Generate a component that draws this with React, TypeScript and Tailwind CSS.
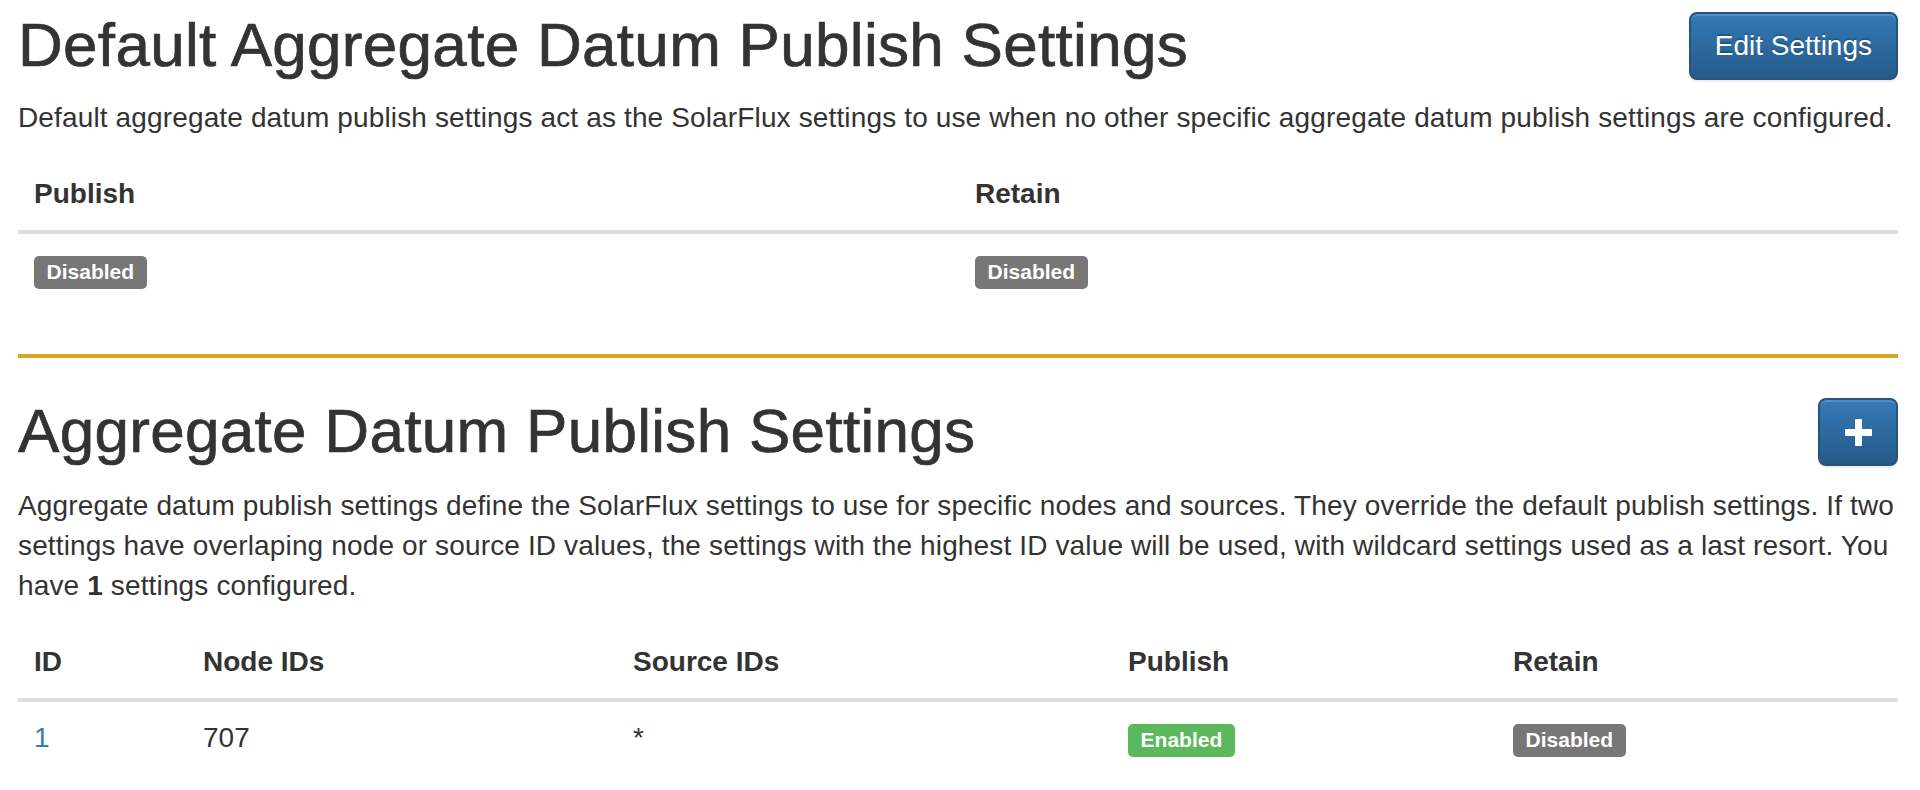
import React from "react";

type Tone = "default" | "success";

const Badge: React.FC<{ tone?: Tone; children: React.ReactNode }> = ({ tone = "default", children }) => (
  <span
    className={
      tone === "success"
        ? "inline-block rounded-[5px] bg-[#5cb85c] px-[12.6px] pt-[4.2px] pb-[6.3px] align-baseline text-[21px] font-bold leading-[23px] text-white"
        : "inline-block rounded-[5px] bg-[#777777] px-[12.6px] pt-[4.2px] pb-[6.3px] align-baseline text-[21px] font-bold leading-[23px] text-white"
    }
  >
    {children}
  </span>
);

const PlusIcon = () => (
  <svg width="27" height="27" viewBox="0 0 27 27" fill="#ffffff" aria-hidden="true">
    <rect x="10" y="0" width="7" height="27" rx="1" />
    <rect x="0" y="10" width="27" height="7" rx="1" />
  </svg>
);

const btnClass =
  "h-[68px] shrink-0 rounded-[8px] border-2 border-[#245580] bg-linear-to-b from-[#337ab7] to-[#265a88] px-[24px] text-[28px] leading-[40px] text-white [text-shadow:0_-2px_0_rgba(0,0,0,0.2)] shadow-[inset_0_2px_0_rgba(255,255,255,0.15),0_2px_2px_rgba(0,0,0,0.075)]";

// headings are medium weight in the original; fake it with a thin stroke
const h1Class = "text-[62px] font-normal leading-[66px] tracking-[0.3px] [-webkit-text-stroke:0.7px_#333333]";

const thClass = "border-b-4 border-[#dddddd] px-[16px] py-[16px] text-left text-[28px] font-bold leading-[40px]";
const tdClass = "px-[16px] py-[16px] text-left text-[28px] leading-[40px] align-top";

interface AggSetting {
  id: number;
  nodeIds: string;
  sourceIds: string;
  publish: boolean;
  retain: boolean;
}

const settings: AggSetting[] = [{ id: 1, nodeIds: "707", sourceIds: "*", publish: true, retain: false }];

const Flag: React.FC<{ on: boolean }> = ({ on }) =>
  on ? <Badge tone="success">Enabled</Badge> : <Badge>Disabled</Badge>;

export default function App() {
  return (
    <div className="min-h-screen bg-white pl-[18px] pr-[22px] pt-[12px] font-['Liberation_Sans',Arial,sans-serif] text-[#333333]">
      {/* Default settings */}
      <section>
        <div className="flex items-start justify-between">
          <h1 className={h1Class}>Default Aggregate Datum Publish Settings</h1>
          <button className={btnClass}>Edit Settings</button>
        </div>
        <p className="mt-[18px] text-[28px] leading-[40px] tracking-[0.14px]">
          Default aggregate datum publish settings act as the SolarFlux settings to use when no other specific aggregate
          datum publish settings are configured.
        </p>
        <table className="mt-[20px] w-full table-fixed border-collapse">
          <thead>
            <tr>
              <th className={`${thClass} w-[941px]`}>Publish</th>
              <th className={thClass}>Retain</th>
            </tr>
          </thead>
          <tbody>
            <tr>
              <td className={tdClass}>
                <Flag on={false} />
              </td>
              <td className={tdClass}>
                <Flag on={false} />
              </td>
            </tr>
          </tbody>
        </table>
      </section>

      {/* Specific settings */}
      <section className="mt-[48px] border-t-4 border-[#d5aa1c] pt-[40px]">
        <div className="flex items-start justify-between">
          <h1 className={h1Class}>Aggregate Datum Publish Settings</h1>
          <button className={`${btnClass} flex w-[80px] items-center justify-center px-0`} aria-label="Add">
            <PlusIcon />
          </button>
        </div>
        <p className="mt-[20px] text-[28px] leading-[40px] tracking-[0.14px]">
          Aggregate datum publish settings define the SolarFlux settings to use for specific nodes and sources. They
          override the default publish settings. If two
          <br />
          settings have overlaping node or source ID values, the settings with the highest ID value will be used, with
          wildcard settings used as a last resort. You
          <br />
          have <b>1</b> settings configured.
        </p>
        <table className="mt-[20px] w-full table-fixed border-collapse">
          <thead>
            <tr>
              <th className={`${thClass} w-[169px]`}>ID</th>
              <th className={`${thClass} w-[430px]`}>Node IDs</th>
              <th className={`${thClass} w-[495px]`}>Source IDs</th>
              <th className={`${thClass} w-[385px]`}>Publish</th>
              <th className={thClass}>Retain</th>
            </tr>
          </thead>
          <tbody>
            {settings.map((s) => (
              <tr key={s.id}>
                <td className={tdClass}>
                  <a href="#" className="text-[#337ab7]">
                    {s.id}
                  </a>
                </td>
                <td className={tdClass}>{s.nodeIds}</td>
                <td className={tdClass}>{s.sourceIds}</td>
                <td className={tdClass}>
                  <Flag on={s.publish} />
                </td>
                <td className={tdClass}>
                  <Flag on={s.retain} />
                </td>
              </tr>
            ))}
          </tbody>
        </table>
      </section>
    </div>
  );
}
